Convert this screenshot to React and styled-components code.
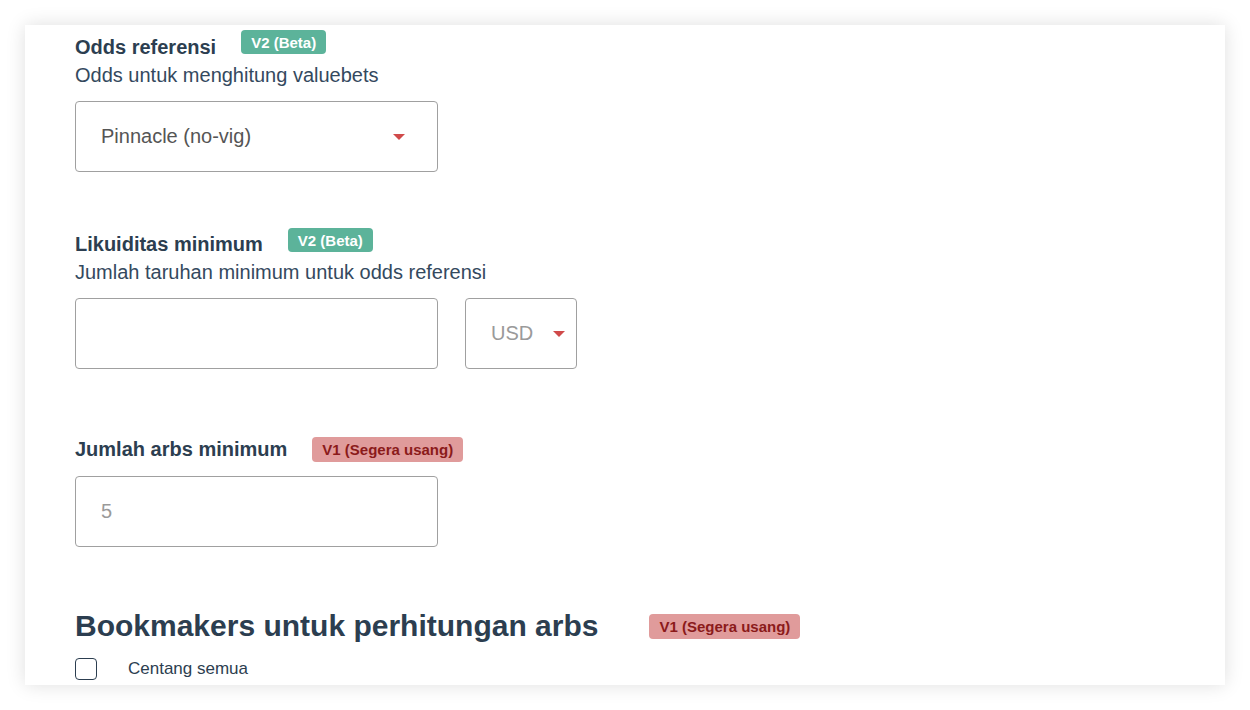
import React from "react";
import styled, { createGlobalStyle } from "styled-components";

const GlobalStyle = createGlobalStyle`
  body {
    margin: 0;
    background: #ffffff;
    font-family: "Liberation Sans", Arial, sans-serif;
    color: #2c3e50;
  }
`;

const Page = styled.div`
  padding: 25px;
  width: 1200px;
`;

const Card = styled.div`
  background: #fff;
  height: 660px;
  overflow: hidden;
  box-shadow: 0 0 18px rgba(0, 0, 0, 0.13);
  padding: 5px 50px 0;
  box-sizing: border-box;
`;

const Section = styled.div`
  margin-top: ${({ top }) => top || 0}px;
`;

const LabelRow = styled.div`
  display: flex;
  align-items: flex-start;
  gap: 25px;
`;

const Label = styled.div`
  font-size: 20px;
  font-weight: 700;
  line-height: 24px;
  margin-top: ${({ offset }) => offset || 0}px;
  color: #2c3e50;
`;

const Badge = styled.span`
  display: inline-flex;
  align-items: center;
  height: ${({ h }) => h || 24}px;
  padding: 0 10px;
  border-radius: 4px;
  font-size: 15px;
  font-weight: 700;
  background: ${({ variant }) => (variant === "old" ? "#e09b9b" : "#5cb39a")};
  color: ${({ variant }) => (variant === "old" ? "#8b1a1a" : "#ffffff")};
`;

const Description = styled.div`
  font-size: 20px;
  line-height: 24px;
  margin-top: 4px;
  color: #34495e;
`;

const FieldRow = styled.div`
  display: flex;
  gap: 27px;
  margin-top: 14px;
`;

const Box = styled.div`
  box-sizing: border-box;
  width: ${({ w }) => w}px;
  height: 71px;
  border: 1px solid #a0a0a0;
  border-radius: 4px;
  display: flex;
  align-items: center;
  padding: 0 ${({ pr }) => pr || 32}px 0 25px;
  font-size: 20px;
  color: ${({ muted }) => (muted ? "#9a9a9a" : "#555555")};
`;

const BoxText = styled.span`
  flex: 1;
`;

const Caret = styled.span`
  width: 0;
  height: 0;
  border-left: 6px solid transparent;
  border-right: 6px solid transparent;
  border-top: 6px solid #d04a4a;
`;

const HeadingRow = styled.div`
  display: flex;
  align-items: center;
  gap: 51px;
  margin-top: 61px;
`;

const Heading = styled.h2`
  margin: 0;
  font-size: 30px;
  font-weight: 700;
  line-height: 36px;
  color: #2c3e50;
`;

const CheckRow = styled.label`
  display: flex;
  align-items: center;
  gap: 31px;
  margin-top: 14px;
  font-size: 17px;
  color: #2c3e50;
`;

const CheckBox = styled.span`
  box-sizing: border-box;
  width: 22px;
  height: 22px;
  border: 1.5px solid #2c3e50;
  border-radius: 4px;
`;

export default function App() {
  return (
    <>
      <GlobalStyle />
      <Page>
        <Card>
          <Section>
            <LabelRow>
              <Label offset={5}>Odds referensi</Label>
              <Badge>V2 (Beta)</Badge>
            </LabelRow>
            <Description>Odds untuk menghitung valuebets</Description>
            <FieldRow>
              <Box w={363}>
                <BoxText>Pinnacle (no-vig)</BoxText>
                <Caret />
              </Box>
            </FieldRow>
          </Section>

          <Section top={56}>
            <LabelRow>
              <Label offset={4}>Likuiditas minimum</Label>
              <Badge>V2 (Beta)</Badge>
            </LabelRow>
            <Description>Jumlah taruhan minimum untuk odds referensi</Description>
            <FieldRow>
              <Box w={363} />
              <Box w={112} pr={11} muted>
                <BoxText>USD</BoxText>
                <Caret />
              </Box>
            </FieldRow>
          </Section>

          <Section top={68}>
            <LabelRow>
              <Label>Jumlah arbs minimum</Label>
              <Badge variant="old" h={25}>V1 (Segera usang)</Badge>
            </LabelRow>
            <FieldRow>
              <Box w={363} muted>
                <BoxText>5</BoxText>
              </Box>
            </FieldRow>
          </Section>

          <HeadingRow>
            <Heading>Bookmakers untuk perhitungan arbs</Heading>
            <Badge variant="old" h={25}>V1 (Segera usang)</Badge>
          </HeadingRow>
          <CheckRow>
            <CheckBox />
            Centang semua
          </CheckRow>
        </Card>
      </Page>
    </>
  );
}
